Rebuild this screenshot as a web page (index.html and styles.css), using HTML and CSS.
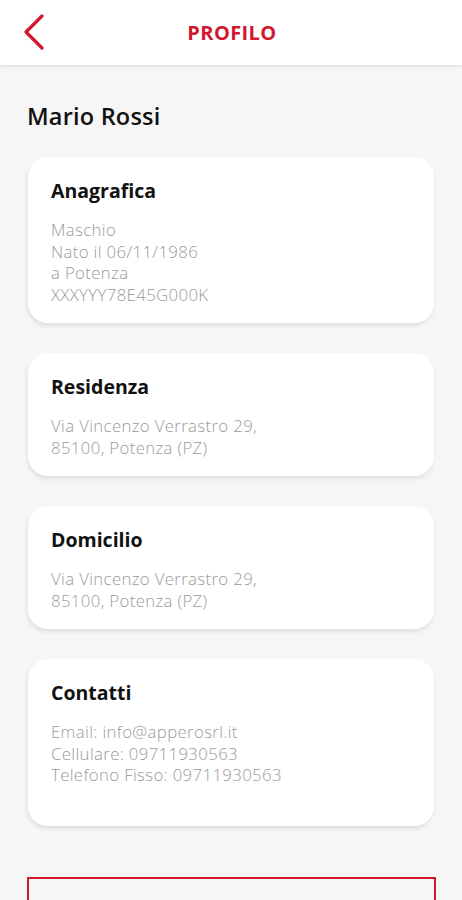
FILE: index.html
```html
<!DOCTYPE html>
<html lang="it">
<head>
    <meta charset="UTF-8">
    <meta name="viewport" content="width=device-width, initial-scale=1.0">
    <title>Profilo</title>
    <link rel="stylesheet" href="styles.css">
</head>
<body>

    <!-- Barra superiore -->
    <header class="topbar">
        <a class="back" href="#">
            <svg width="22" height="36" viewBox="0 0 22 36">
                <polyline points="19,2 3,18 19,34" fill="none" stroke="#d3172e" stroke-width="3.2" stroke-linecap="round" stroke-linejoin="round"/>
            </svg>
        </a>
        <h1>PROFILO</h1>
    </header>

    <!-- Contenuto -->
    <main class="content">
        <h2 class="name">Mario Rossi</h2>

        <section class="card">
            <h3>Anagrafica</h3>
            <p>Maschio<br>Nato il 06/11/1986<br>a Potenza<br>XXXYYY78E45G000K</p>
        </section>

        <section class="card">
            <h3>Residenza</h3>
            <p>Via Vincenzo Verrastro 29,<br>85100, Potenza (PZ)</p>
        </section>

        <section class="card">
            <h3>Domicilio</h3>
            <p>Via Vincenzo Verrastro 29,<br>85100, Potenza (PZ)</p>
        </section>

        <section class="card card-tall">
            <h3>Contatti</h3>
            <p>Email: info@apperosrl.it<br>Cellulare: 09711930563<br>Telefono Fisso: 09711930563</p>
        </section>

        <button class="outline-btn" type="button"></button>
    </main>

</body>
</html>
```

FILE: styles.css
```css
/* Pagina */
body {
    margin: 0;
    background: #f6f6f6;
    font-family: 'Open Sans', 'Lato', sans-serif;
    color: #111;
}

/* Barra superiore */
.topbar {
    height: 65px;
    background: #fff;
    box-shadow: 0 2px 2px rgba(0, 0, 0, 0.08);
    display: flex;
    align-items: center;
    justify-content: center;
    position: relative;
}

.back {
    position: absolute;
    left: 23px;
    top: 14px;
    display: block;
    height: 36px;
}

.topbar h1 {
    margin: 0 0 1px 2px;
    font-size: 20px;
    font-weight: 700;
    color: #d3172e;
    letter-spacing: 0.4px;
}

/* Contenuto */
.content {
    padding: 36px 28px 0;
    display: flex;
    flex-direction: column;
    gap: 30px;
}

.name {
    margin: 0 0 -4px -1px;
    font-size: 23.5px;
    line-height: 30px;
    font-weight: 600;
    letter-spacing: 0.2px;
}

.card {
    background: #fff;
    border-radius: 20px;
    padding: 22px 23px 18px;
    box-shadow: -1px 3px 4px rgba(0, 0, 0, 0.09);
}

.card-tall {
    padding-bottom: 40px;
}

.card h3 {
    margin: 0 0 16px;
    font-size: 19.5px;
    line-height: 24px;
    font-weight: 700;
}

.card p {
    margin: 0;
    font-size: 16.8px;
    line-height: 21.5px;
    font-weight: 300;
    color: #9a9a9a;
    letter-spacing: 0.35px;
}

.outline-btn {
    margin: 21px -2px 0 -1px;
    height: 60px;
    background: transparent;
    border: 2px solid #d3172e;
}
```
